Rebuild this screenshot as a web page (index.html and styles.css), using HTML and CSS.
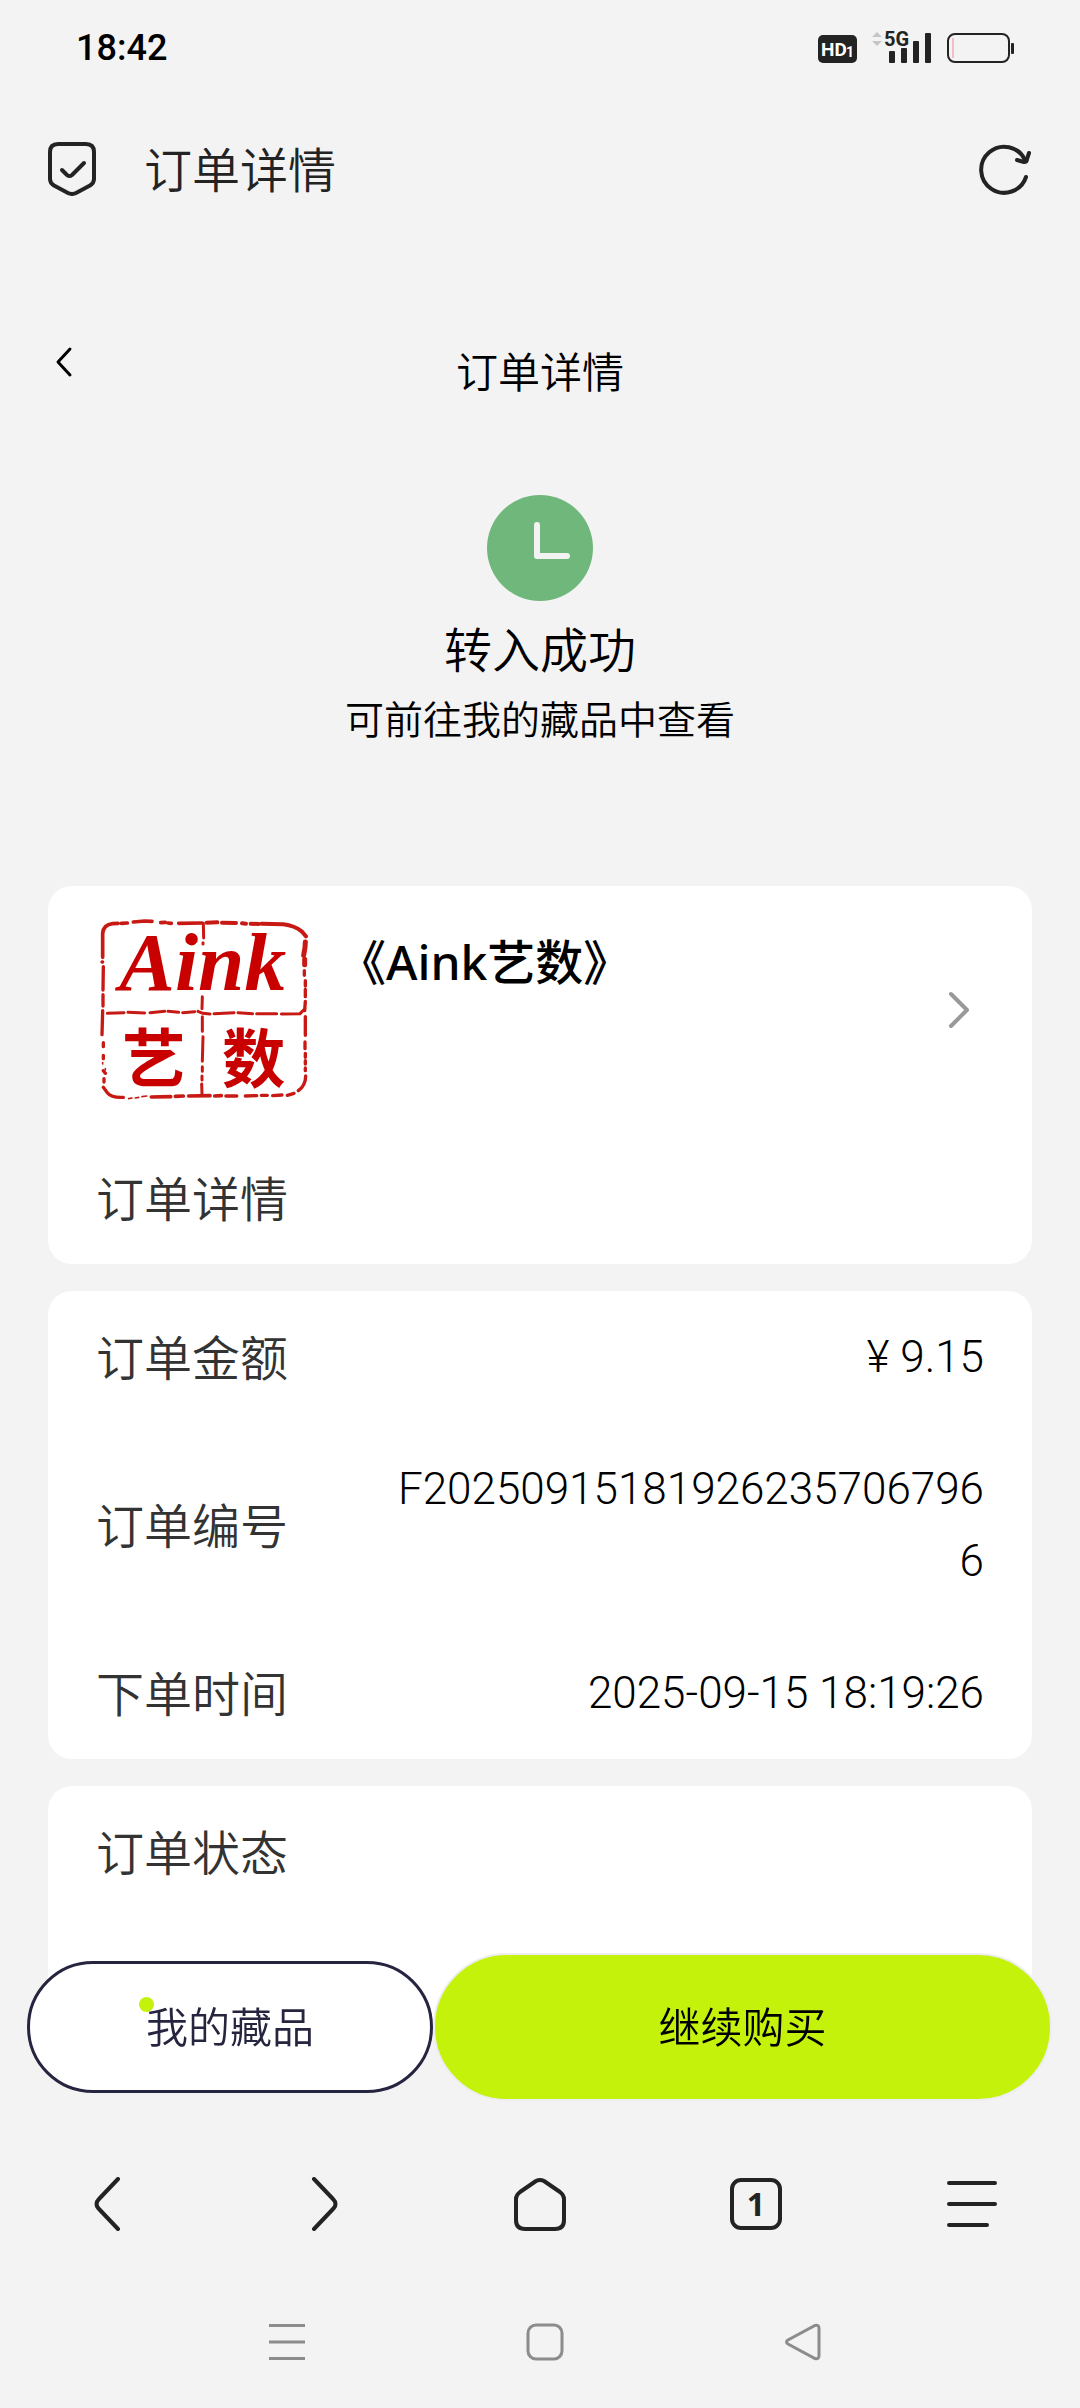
FILE: index.html
```html
<!DOCTYPE html>
<html lang="zh-CN">
<head>
<meta charset="utf-8">
<meta name="viewport" content="width=device-width, initial-scale=1">
<title>订单详情</title>
<link rel="stylesheet" href="styles.css">
</head>
<body>
<header class="statusbar">
  <time class="clock">18:42</time>
  <svg class="indicators" viewBox="0 -6 198 46" aria-hidden="true">
    <rect x="0" y="4" width="39" height="28" rx="5" fill="#232323"/>
    <text x="3" y="25" class="hd">HD</text>
    <text x="28" y="26" class="hd-sub">1</text>
    <path d="M54 6l5-5 5 5zM54 10l5 5 5-5z" fill="#c6c6c6"/>
    <text x="66" y="15" class="net">5G</text>
    <g fill="#232323">
      <rect x="71" y="20" width="6" height="12" rx="1"/>
      <rect x="83" y="17" width="6" height="15" rx="1"/>
      <rect x="95" y="10" width="6" height="22" rx="1"/>
      <rect x="107" y="2" width="6" height="30" rx="1"/>
      <rect x="193" y="12" width="3" height="11" rx="1"/>
    </g>
    <rect x="130" y="3" width="61" height="28" rx="7" fill="none" stroke="#232323" stroke-width="2"/>
    <path d="M135 7v20" stroke="#f08a9c" stroke-width="1"/>
  </svg>
</header>

<div class="titlebar">
  <svg class="shield" viewBox="0 0 50 54" fill="none" stroke="#232323" stroke-width="4" stroke-linecap="round" stroke-linejoin="round" aria-hidden="true">
    <path d="M11 2h28q8 0 8 8v27q0 4-4 6.500l-14 7.500q-4 2-8 0L7 43.500q-4-2.500-4-6.500V10q0-8 8-8z"/>
    <path d="M15 28l5 5q2.500 2 5 0l12-12"/>
  </svg>
  <span class="titlebar-text">订单详情</span>
  <button class="icon-button" type="button" aria-label="刷新">
    <svg width="52" height="52" viewBox="0 0 52 52" fill="none" stroke="#232323" stroke-width="4" stroke-linecap="round" stroke-linejoin="round">
      <path d="M47 34A23 23 0 1 1 46 17"/>
      <path d="M38 17l7 2q3 0 3-3l2-6"/>
    </svg>
  </button>
</div>

<main class="page">
  <div class="page-header">
    <button class="back" type="button" aria-label="返回">
      <svg width="18" height="32" viewBox="0 0 18 32" fill="none" stroke="#000" stroke-width="3" stroke-linecap="round" stroke-linejoin="round"><path d="M15 3L3 16l12 13"/></svg>
    </button>
    <h1 class="page-title">订单详情</h1>
  </div>

  <section class="result">
    <svg class="result-icon" viewBox="0 0 107 107" aria-hidden="true">
      <circle cx="53" cy="53" r="53" fill="#70b77b"/>
      <path d="M50 30v31h30" fill="none" stroke="#f3f3f3" stroke-width="6" stroke-linecap="round" stroke-linejoin="round"/>
    </svg>
    <h2 class="result-title">转入成功</h2>
    <p class="result-note">可前往我的藏品中查看</p>
  </section>

  <div class="cards">
    <section class="card">
      <a class="product" href="#product">
        <svg class="seal" viewBox="168 138 648 564" role="img" aria-label="Aink艺数">
          <g fill="none" stroke="#c81a14" stroke-linecap="round">
            <path stroke-width="11" d="M188 262v-72q2-26 30-29l16-1M244 160l18-1M280 156l34-3 22 1M362 158l14-1M384 159l10 1M416 160l70-1"/>
            <path stroke-width="12" d="M500 158l32-1M546 158l42 1M606 160l12 1M632 161l24 1M664 161l66 2q34 4 56 22l12 14"/>
            <path stroke-width="15" d="M796 216l-1 16-4 24M794 268v16"/>
            <path stroke-width="10" d="M793 302v14M796 332v16M796 358v22M796 394l-2 28M796 440v56M795 516v20M796 550v12M796 572v10M796 594v8M797 618q0 28-22 44M762 670l-20 6M726 675l-28 2M682 676h-18M650 677l-34 1"/>
            <path stroke-width="11" d="M590 678h-32M544 677l-20 1M510 677l-64 1M430 678l-24 1M392 680l-58 1"/>
            <path stroke-width="5" d="M320 678l-14 2M296 682l-10 2M276 684l-10 2M188 578v4M196 596v4"/>
            <path stroke-width="10" d="M250 682q-36 2-48-14l-12-16M192 636v-10M196 610l-6-8M190 566v-10M190 530v-12M186 494l2-72M189 408v-34M189 360l1-70M186 276h2"/>
            <path stroke-width="9" d="M202 430l50-2M264 427l50 2M330 428l44-4M384 424l32 3M428 428l36-3M474 424l14 6 22 2M522 431l60-3M594 428l44 3M650 431h60M724 432l56-1 14-14"/>
            <path stroke-width="9" d="M490 160l1 44M489 218v4M487 380l-1 36M487 440v44M489 500l-2 74M487 590v14M486 618v12M485 642l1 30"/>
          </g>
          <text class="seal-latin" x="238" y="360">Aink</text>
          <text class="seal-han" x="246" y="636">艺</text>
          <text class="seal-han" x="546" y="636">数</text>
        </svg>
        <span class="product-name">《Aink艺数》</span>
        <svg class="product-arrow" width="24" height="40" viewBox="0 0 24 40" fill="none" stroke="#999" stroke-width="4" stroke-linecap="round" stroke-linejoin="round"><path d="M3 4l16 16L3 36"/></svg>
      </a>
      <h3 class="card-heading">订单详情</h3>
    </section>

    <dl class="card">
      <div class="row"><dt>订单金额</dt><dd>¥ 9.15</dd></div>
      <div class="row"><dt>订单编号</dt><dd>F202509151819262357067966</dd></div>
      <div class="row"><dt>下单时间</dt><dd>2025-09-15 18:19:26</dd></div>
    </dl>

    <section class="card card-state">
      <h3 class="card-heading">订单状态</h3>
    </section>
  </div>
</main>

<footer class="dock">
  <div class="actions">
    <button class="action action-outline" type="button"><span class="action-label">我的藏品<i class="dot"></i></span></button>
    <button class="action action-primary" type="button"><span class="action-label">继续购买</span></button>
  </div>
  <nav class="toolbar" aria-label="浏览器">
    <button class="icon-button" type="button" aria-label="后退">
      <svg width="54" height="54" viewBox="0 0 54 54"><path d="M37 2L18 22q-5 5 0 10l19 20"/></svg>
    </button>
    <button class="icon-button" type="button" aria-label="前进">
      <svg width="54" height="54" viewBox="0 0 54 54"><path d="M17 2l19 20q5 5 0 10L17 52"/></svg>
    </button>
    <button class="icon-button" type="button" aria-label="主页">
      <svg width="54" height="54" viewBox="0 0 54 54"><path d="M23 4q4-2 8 0l16 11q4 3 4 7v21q0 9-9 9H12q-9 0-9-9V22q0-4 4-7z"/></svg>
    </button>
    <button class="icon-button" type="button" aria-label="标签页"><span class="tab-count">1</span></button>
    <button class="icon-button" type="button" aria-label="菜单">
      <svg width="54" height="54" viewBox="0 0 54 54"><path d="M4 6h46M4 27h46M4 48h38"/></svg>
    </button>
  </nav>
  <nav class="sysnav" aria-label="系统导航">
    <button class="icon-button" type="button" aria-label="最近任务">
      <svg width="38" height="38" viewBox="0 0 38 38"><path d="M1 2.500h36M1 19h36M1 35.500h36"/></svg>
    </button>
    <button class="icon-button" type="button" aria-label="桌面">
      <svg width="38" height="38" viewBox="0 0 38 38"><rect x="2" y="2" width="34" height="34" rx="8"/></svg>
    </button>
    <button class="icon-button" type="button" aria-label="返回上一级">
      <svg width="38" height="38" viewBox="0 0 38 38"><path d="M31 2.500q4-1 4 3v27q0 4-4 3L4 21q-3-2 0-4z"/></svg>
    </button>
  </nav>
</footer>
</body>
</html>
```
FILE: styles.css
```css
* {
  box-sizing: border-box;
}

body {
  margin: 0;
  background: #f3f3f3;
  color: #000;
  font-family: "Noto Sans CJK SC", "Noto Sans", sans-serif;
  font-size: 48px;
  font-weight: 350;
  line-height: 72px;
}

h1, h2, h3, p, dl, dd {
  margin: 0;
  font-weight: 350;
}

button {
  margin: 0;
  padding: 0;
  border: 0;
  background: none;
  color: inherit;
  font: inherit;
}

svg {
  display: block;
}

.statusbar {
  display: flex;
  align-items: center;
  justify-content: space-between;
  height: 96px;
  padding: 0 64px 0 76px;
}

.clock {
  font-family: Roboto, sans-serif;
  font-size: 36px;
  font-weight: 500;
}

.indicators {
  width: 198px;
  height: 46px;
}

.indicators text {
  font-family: Roboto, sans-serif;
  font-weight: 700;
}

.hd {
  fill: #fff;
  font-size: 19px;
}

.hd-sub {
  fill: #fff;
  font-size: 14px;
}

.net {
  fill: #232323;
  font-size: 20px;
}

.titlebar {
  display: flex;
  align-items: center;
  height: 146px;
  padding: 0 49px 0 47px;
  color: #232323;
}

.shield {
  width: 50px;
  height: 54px;
}

.titlebar-text {
  flex: 1;
  padding: 0 0 4px 47px;
}

.icon-button {
  display: flex;
  align-items: center;
  justify-content: center;
}

.page-header {
  display: grid;
  grid-template-columns: 64px 1fr 64px;
  align-items: start;
  padding: 88px 32px 0;
}

.back {
  display: flex;
  align-items: center;
  justify-content: center;
  height: 64px;
}

.page-title {
  padding-bottom: 4px;
  font-size: 42px;
  line-height: 80px;
  text-align: center;
}

.result {
  display: flex;
  flex-direction: column;
  align-items: center;
  padding: 81px 48px 135px;
}

.result-icon {
  width: 107px;
  height: 107px;
  margin-bottom: 9px;
}

.result-title {
  font-size: 48px;
}

.result-note {
  font-size: 39px;
  line-height: 68px;
}

.cards {
  display: flex;
  flex-direction: column;
  gap: 27px;
  padding: 0 48px 381px;
}

.card {
  border-radius: 24px;
  background: #fff;
}

.product {
  display: flex;
  align-items: center;
  padding: 30px 60px 28px 48px;
  color: inherit;
  text-decoration: none;
}

.seal {
  width: 216px;
  height: 188px;
}

.seal text {
  fill: #c80000;
  font-weight: 700;
}

.seal-latin {
  font-family: "Liberation Serif", serif;
  font-size: 250px;
  font-style: italic;
}

.seal-han {
  font-size: 190px;
}

.product-name {
  flex: 1;
  align-self: flex-start;
  padding: 10px 26px;
  font-family: "Noto Sans", "Noto Sans CJK SC", sans-serif;
  font-weight: 500;
}

.card-heading {
  padding: 28px 48px 32px;
  color: #333;
  font-size: 48px;
}

.card-state {
  min-height: 241px;
}

.row {
  display: flex;
  align-items: center;
  justify-content: space-between;
  padding: 30px 48px;
}

.row dt {
  padding-bottom: 4px;
  color: #333;
  line-height: 68px;
}

.row dd {
  max-width: 67%;
  font-family: Roboto, sans-serif;
  font-size: 44px;
  text-align: right;
  word-break: break-all;
}

.dock {
  position: fixed;
  right: 0;
  bottom: 0;
  left: 0;
}

.actions {
  display: grid;
  grid-template-columns: 40fr 61fr;
  align-items: center;
  padding: 0 28px 31px 27px;
}

.action {
  border-radius: 74px;
  font-size: 42px;
}

.action-outline {
  height: 132px;
  border: 3px solid #25253f;
  background: #fff;
  color: #25253f;
}

.action-primary {
  height: 148px;
  border: 2px solid #ededf2;
  background: #c4f20a;
}

.action-label {
  display: inline-block;
  position: relative;
  padding-bottom: 4px;
}

.dot {
  position: absolute;
  top: 8px;
  left: -7px;
  width: 15px;
  height: 15px;
  border-radius: 50%;
  background: #c4f20a;
}

.toolbar {
  display: grid;
  grid-template-columns: repeat(5, 1fr);
  height: 144px;
  background: #f3f3f3;
}

.toolbar svg {
  fill: none;
  stroke: #232323;
  stroke-width: 4;
  stroke-linecap: round;
  stroke-linejoin: round;
}

.tab-count {
  width: 52px;
  height: 52px;
  border: 4px solid #232323;
  border-radius: 11px;
  color: #232323;
  font-family: "Noto Sans", sans-serif;
  font-size: 32px;
  font-weight: 700;
  line-height: 44px;
}

.sysnav {
  display: grid;
  grid-template-columns: repeat(3, 1fr);
  height: 132px;
  padding: 0 148px 0 158px;
  background: #f3f3f3;
}

.sysnav svg {
  fill: none;
  stroke: #8c8c8c;
  stroke-width: 3;
}
```
